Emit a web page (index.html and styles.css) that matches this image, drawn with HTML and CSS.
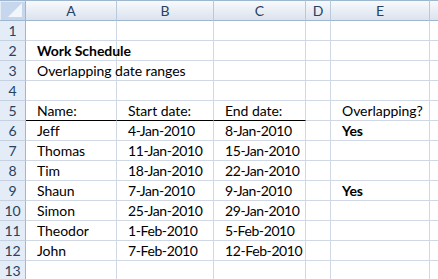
FILE: index.html
```html
<!DOCTYPE html>
<html>
<head>
<meta charset="utf-8">
<link rel="stylesheet" href="styles.css">
</head>
<body>
<div class="sheet">
  <div class="corner"><span class="tri"></span></div>
  <div class="ch">A</div><div class="ch">B</div><div class="ch">C</div><div class="ch">D</div><div class="ch">E</div><div class="ch last"></div>

  <div class="rh">1</div><div class="c"></div><div class="c"></div><div class="c"></div><div class="c"></div><div class="c"></div><div class="c"></div>
  <div class="rh">2</div><div class="c b">Work Schedule</div><div class="c"></div><div class="c"></div><div class="c"></div><div class="c"></div><div class="c"></div>
  <div class="rh">3</div><div class="c ov">Overlapping date ranges</div><div class="c"></div><div class="c"></div><div class="c"></div><div class="c"></div><div class="c"></div>
  <div class="rh">4</div><div class="c"></div><div class="c"></div><div class="c"></div><div class="c"></div><div class="c"></div><div class="c"></div>
  <div class="rh">5</div><div class="c ul">Name:</div><div class="c ul">Start date:</div><div class="c ul">End date:</div><div class="c"></div><div class="c">Overlapping?</div><div class="c"></div>
  <div class="rh">6</div><div class="c">Jeff</div><div class="c d">4-Jan-2010</div><div class="c d">8-Jan-2010</div><div class="c"></div><div class="c b">Yes</div><div class="c"></div>
  <div class="rh">7</div><div class="c">Thomas</div><div class="c d">11-Jan-2010</div><div class="c d">15-Jan-2010</div><div class="c"></div><div class="c"></div><div class="c"></div>
  <div class="rh">8</div><div class="c">Tim</div><div class="c d">18-Jan-2010</div><div class="c d">22-Jan-2010</div><div class="c"></div><div class="c"></div><div class="c"></div>
  <div class="rh">9</div><div class="c">Shaun</div><div class="c d">7-Jan-2010</div><div class="c d">9-Jan-2010</div><div class="c"></div><div class="c b">Yes</div><div class="c"></div>
  <div class="rh">10</div><div class="c">Simon</div><div class="c d">25-Jan-2010</div><div class="c d">29-Jan-2010</div><div class="c"></div><div class="c"></div><div class="c"></div>
  <div class="rh">11</div><div class="c">Theodor</div><div class="c d">1-Feb-2010</div><div class="c d">5-Feb-2010</div><div class="c"></div><div class="c"></div><div class="c"></div>
  <div class="rh">12</div><div class="c">John</div><div class="c d">7-Feb-2010</div><div class="c d">12-Feb-2010</div><div class="c"></div><div class="c"></div><div class="c"></div>
  <div class="rh">13</div><div class="c"></div><div class="c"></div><div class="c"></div><div class="c"></div><div class="c"></div><div class="c"></div>
</div>
</body>
</html>
```

FILE: styles.css
```css
* { box-sizing: border-box; }
html, body { margin: 0; padding: 0; background: #fff; overflow: hidden; }
body { width: 438px; height: 279px; }
.sheet {
  display: grid;
  grid-template-columns: 26px 91px 97px 92px 25px 99px 8px;
  grid-template-rows: 21px repeat(13, 20px);
  font-family: Lato, "Open Sans", sans-serif;
  font-size: 14px;
  letter-spacing: -0.05px;
  color: #000;
  overflow: hidden;
}
.corner {
  position: relative;
  border-top: 1px solid #9eb6ce;
  border-right: 1px solid #9eb6ce;
  border-bottom: 1px solid #9eb6ce;
  background: #c6d6ec;
  box-shadow: inset 1px 1px 0 #e4ecf7;
}
.tri {
  position: absolute;
  right: 3px;
  bottom: 3px;
  width: 0; height: 0;
  border-left: 14px solid transparent;
  border-bottom: 14px solid #f2f5fa;
}
.ch {
  border-top: 1px solid #9eb6ce;
  border-right: 1px solid #b9c9da;
  border-bottom: 1px solid #9eb6ce;
  background: linear-gradient(#f8fafc, #e6ecf4 60%, #dbe3ee);
  color: #27415f;
  display: flex; align-items: center; justify-content: center;
  line-height: 1;
  letter-spacing: 0;
}
.ch.last { border-right: none; }
.rh {
  border-right: 1px solid #9eb6ce;
  border-bottom: 1px solid #c5d1e0;
  background: #e4ecf7;
  color: #27415f;
  display: flex; align-items: center; justify-content: center;
  line-height: 1;
  letter-spacing: 0;
}
.c {
  border-right: 1px solid #d0d7e5;
  border-bottom: 1px solid #d0d7e5;
  padding-left: 11px;
  white-space: nowrap;
  line-height: 19px;
  position: relative;
}
.c.d { letter-spacing: -0.4px; }
.c.ov { z-index: 1; }
.b { font-weight: bold; }
.ul { border-bottom: 1px solid #000; }
```
